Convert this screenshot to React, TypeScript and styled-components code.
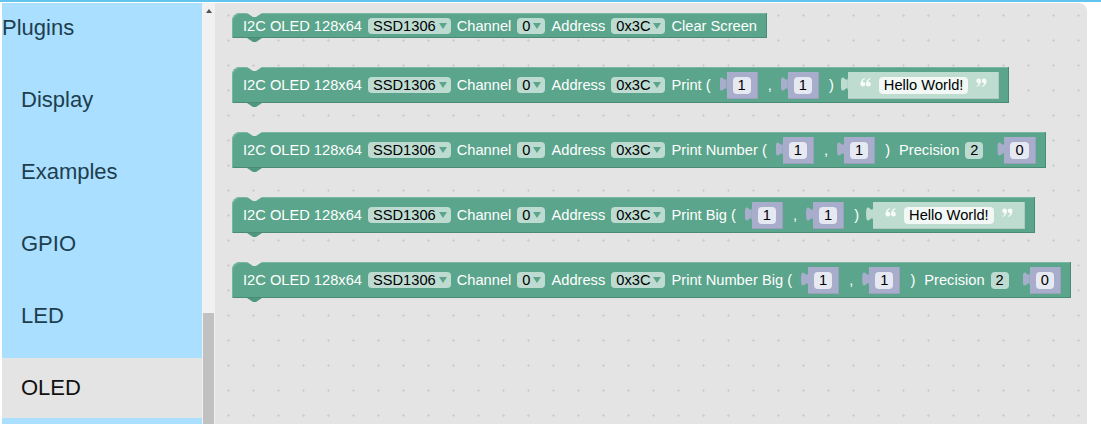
import React from "react";
import styled, { createGlobalStyle } from "styled-components";

const GlobalStyle = createGlobalStyle`
  html, body { margin: 0; padding: 0; background: #ffffff; }
  body { font-family: "Liberation Sans", Arial, sans-serif; }
  * { box-sizing: border-box; }
`;

const Frame = styled.div`
  height: 424px;
  border-top: 2px solid #62c4ec;
  padding: 1px 0 0 2px;
  display: flex;
  overflow: hidden;
`;

const Sidebar = styled.nav`
  width: 200px;
  flex: none;
  background: #aadfff;
  color: #1d3e4e;
  display: flex;
  flex-direction: column;
`;

const SidebarTitle = styled.div`
  height: 50px;
  line-height: 50px;
  font-size: 22px;
`;

const CategoryList = styled.div`
  display: flex;
  flex-direction: column;
  gap: 12px;
  padding-top: 17px;
`;

const Category = styled.div<{ $selected?: boolean }>`
  height: 60px;
  line-height: 60px;
  padding-left: 19px;
  font-size: 22px;
  background: ${(p) => (p.$selected ? "#e4e4e4" : "transparent")};
  color: ${(p) => (p.$selected ? "#111111" : "inherit")};
`;

const ScrollTrack = styled.div`
  width: 13px;
  flex: none;
  background: #f1f1f1;
  display: flex;
  flex-direction: column;
  align-items: center;
`;

const ScrollArrow = styled.div`
  width: 0;
  height: 0;
  margin-top: 6px;
  border-left: 3.5px solid transparent;
  border-right: 3.5px solid transparent;
  border-bottom: 4px solid #505050;
`;

const ScrollThumb = styled.div`
  width: 11px;
  flex: 1;
  margin-top: 300px;
  background: #c1c1c1;
`;

const Workspace = styled.main`
  position: relative;
  width: 872px;
  flex: none;
  background: #e4e4e4;
  border-top-right-radius: 8px;
  overflow: hidden;
`;

const GridLayer = styled.svg`
  position: absolute;
  inset: 0;
  width: 100%;
  height: 100%;
`;

const BlockStack = styled.div`
  position: relative;
  display: flex;
  flex-direction: column;
  align-items: flex-start;
  gap: 29px;
  padding: 10px 0 0 17px;
`;

const GREEN = "#5ba58c";

const Block = styled.div<{ $tall?: boolean }>`
  position: relative;
  display: flex;
  align-items: center;
  gap: 6px;
  height: ${(p) => (p.$tall ? 36 : 25)}px;
  padding: 0 10px 0 11px;
  background: ${GREEN};
  border-radius: 8px 0 0 2px;
  box-shadow: inset -1px -1px 0 #4a8b75, inset 1px 1px 0 #78b7a2;
  color: #ffffff;
  font-size: 11pt;
  white-space: nowrap;

  &::before {
    content: "";
    position: absolute;
    top: 0;
    left: 15px;
    width: 15px;
    height: 4px;
    background: #e4e4e4;
    clip-path: polygon(0 0, 40% 100%, 60% 100%, 100% 0);
  }

  &::after {
    content: "";
    position: absolute;
    top: 100%;
    left: 15px;
    width: 15px;
    height: 4px;
    background: #4f9780;
    clip-path: polygon(0 0, 40% 100%, 60% 100%, 100% 0);
  }
`;

const Label = styled.span<{ $ml?: number }>`
  margin-left: ${(p) => p.$ml ?? 0}px;
`;

const Dropdown = styled.span`
  display: inline-flex;
  align-items: center;
  gap: 3px;
  height: 16px;
  padding: 0 4px 0 5px;
  border-radius: 4px;
  background: rgba(255, 255, 255, 0.6);
  color: #000000;
`;

const Field = styled.span<{ $bg: string }>`
  display: inline-flex;
  align-items: center;
  height: 17px;
  padding: 0 5px;
  border-radius: 4px;
  background: ${(p) => p.$bg};
  color: #000000;
`;

const TAB = "path('M7 0 C7 10 0 -8 0 7.5 C0 23 7 5 7 15 Z')";

const ValueInput = styled.span<{ $tone: "num" | "str"; $ml: number }>`
  position: relative;
  display: inline-flex;
  align-items: center;
  gap: 8px;
  height: 27px;
  margin-left: ${(p) => p.$ml}px;
  margin-right: 4px;
  padding: ${(p) => (p.$tone === "num" ? "0 7px 0 6px" : "0 12px 0 12px")};
  background: ${(p) => (p.$tone === "num" ? "#a8adcc" : "#bfdcd1")};
  box-shadow: inset -1px -1px 0 rgba(0, 0, 0, 0.08);

  &:last-child {
    margin-right: 0;
  }

  &::before {
    content: "";
    position: absolute;
    left: -7px;
    top: 5px;
    width: 7px;
    height: 15px;
    background: ${(p) => (p.$tone === "num" ? "#a8adcc" : "#bfdcd1")};
    clip-path: ${TAB};
  }
`;

const QuoteIcon = styled.svg`
  flex: none;
  margin-top: -5px;
`;

const Mark = ({ dx }: { dx: number }) => (
  <g transform={`translate(${dx} 0)`}>
    <circle cx="2.6" cy="6.2" r="2.4" />
    <path d="M0.2 6.2 C0.2 3.4 1.6 1.2 4.2 0 L4.7 1 C3.2 1.8 2.5 2.9 2.6 3.8 Z" />
  </g>
);

const Quote = ({ close }: { close?: boolean }) => (
  <QuoteIcon width="11" height="9" viewBox="0 0 11 9" aria-hidden="true">
    <g fill="#f6fbf9" transform={close ? "rotate(180 5.5 4.5)" : undefined}>
      <Mark dx={0.3} />
      <Mark dx={5.8} />
    </g>
  </QuoteIcon>
);

const Arrow = () => (
  <svg width="8" height="6" viewBox="0 0 8 6">
    <polygon points="0,0 8,0 4,6" fill={GREEN} />
  </svg>
);

type Part =
  | { k: "label"; t: string; ml?: number }
  | { k: "drop"; t: string }
  | { k: "num"; t: string; extra?: number }
  | { k: "str"; t: string }
  | { k: "field"; t: string };

const prefix: Part[] = [
  { k: "label", t: "I2C OLED 128x64" },
  { k: "drop", t: "SSD1306" },
  { k: "label", t: "Channel" },
  { k: "drop", t: "0" },
  { k: "label", t: "Address" },
  { k: "drop", t: "0x3C" },
];

const coords = (name: string): Part[] => [
  { k: "label", t: name },
  { k: "num", t: "1" },
  { k: "label", t: "," },
  { k: "num", t: "1" },
  { k: "label", t: ")" },
];

const precision: Part[] = [
  { k: "label", t: "Precision", ml: 3 },
  { k: "field", t: "2" },
  { k: "num", t: "0", extra: 5 },
];

const blocks: { tall: boolean; parts: Part[] }[] = [
  { tall: false, parts: [...prefix, { k: "label", t: "Clear Screen" }] },
  { tall: true, parts: [...prefix, ...coords("Print ("), { k: "str", t: "Hello World!" }] },
  { tall: true, parts: [...prefix, ...coords("Print Number ("), ...precision] },
  { tall: true, parts: [...prefix, ...coords("Print Big ("), { k: "str", t: "Hello World!" }] },
  { tall: true, parts: [...prefix, ...coords("Print Number Big ("), ...precision] },
];

const renderPart = (p: Part, i: number) => {
  switch (p.k) {
    case "label":
      return (
        <Label key={i} $ml={p.ml}>
          {p.t}
        </Label>
      );
    case "drop":
      return (
        <Dropdown key={i}>
          {p.t}
          <Arrow />
        </Dropdown>
      );
    case "field":
      return (
        <Field key={i} $bg="rgba(255,255,255,0.6)">
          {p.t}
        </Field>
      );
    case "num":
      return (
        <ValueInput key={i} $tone="num" $ml={10 + (p.extra ?? 0)}>
          <Field $bg="#e6e8f2">{p.t}</Field>
        </ValueInput>
      );
    case "str":
      return (
        <ValueInput key={i} $tone="str" $ml={8}>
          <Quote />
          <Field $bg="#f1f8f5">{p.t}</Field>
          <Quote close />
        </ValueInput>
      );
  }
};

const categories = ["Display", "Examples", "GPIO", "LED", "OLED"];

export default function App() {
  return (
    <>
      <GlobalStyle />
      <Frame>
        <Sidebar>
          <SidebarTitle>Plugins</SidebarTitle>
          <CategoryList>
            {categories.map((c) => (
              <Category key={c} $selected={c === "OLED"}>
                {c}
              </Category>
            ))}
          </CategoryList>
        </Sidebar>
        <ScrollTrack>
          <ScrollArrow />
          <ScrollThumb />
        </ScrollTrack>
        <Workspace>
          <GridLayer aria-hidden="true">
            <defs>
              <pattern id="grid" width="25" height="25" patternUnits="userSpaceOnUse">
                <rect x="12" y="12" width="3" height="1" fill="#cfcfcf" />
                <rect x="13" y="11" width="1" height="3" fill="#cfcfcf" />
              </pattern>
            </defs>
            <rect width="100%" height="100%" fill="url(#grid)" />
          </GridLayer>
          <BlockStack>
            {blocks.map((b, i) => (
              <Block key={i} $tall={b.tall}>
                {b.parts.map(renderPart)}
              </Block>
            ))}
          </BlockStack>
        </Workspace>
      </Frame>
    </>
  );
}
